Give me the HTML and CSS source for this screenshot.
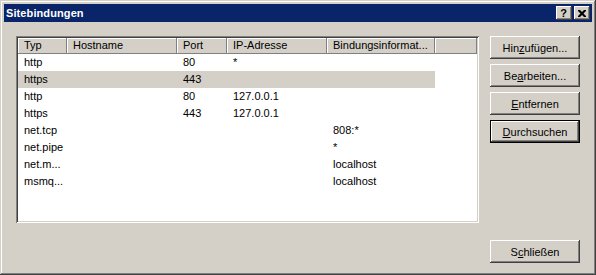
FILE: index.html
```html
<!DOCTYPE html>
<html lang="de">
<head>
    <meta charset="UTF-8">
    <title>Sitebindungen</title>
    <link rel="stylesheet" href="styles.css">
</head>
<body>

    <div class="window">
        <div class="titlebar">
            <span class="title">Sitebindungen</span>
            <div class="title-buttons">
                <div class="cap-btn help">?</div>
                <div class="cap-btn close">
                    <svg width="8" height="7" viewBox="0 0 8 7">
                        <path d="M0 0h2l2 2 2-2h2v1l-2.5 2.5 2.5 2.5v1h-2l-2-2-2 2h-2v-1l2.5-2.5-2.5-2.5z" fill="#000"/>
                    </svg>
                </div>
            </div>
        </div>

        <div class="content">
            <div class="listview">
                <div class="header">
                    <div class="col c1">Typ</div>
                    <div class="col c2">Hostname</div>
                    <div class="col c3">Port</div>
                    <div class="col c4">IP-Adresse</div>
                    <div class="col c5">Bindungsinformat...</div>
                    <div class="col filler"></div>
                </div>
                <div class="row">
                    <div class="cell c1">http</div><div class="cell c2"></div><div class="cell c3">80</div><div class="cell c4">*</div><div class="cell c5"></div>
                </div>
                <div class="row selected">
                    <div class="cell c1">https</div><div class="cell c2"></div><div class="cell c3">443</div><div class="cell c4"></div><div class="cell c5"></div>
                </div>
                <div class="row">
                    <div class="cell c1">http</div><div class="cell c2"></div><div class="cell c3">80</div><div class="cell c4">127.0.0.1</div><div class="cell c5"></div>
                </div>
                <div class="row">
                    <div class="cell c1">https</div><div class="cell c2"></div><div class="cell c3">443</div><div class="cell c4">127.0.0.1</div><div class="cell c5"></div>
                </div>
                <div class="row">
                    <div class="cell c1">net.tcp</div><div class="cell c2"></div><div class="cell c3"></div><div class="cell c4"></div><div class="cell c5">808:*</div>
                </div>
                <div class="row">
                    <div class="cell c1">net.pipe</div><div class="cell c2"></div><div class="cell c3"></div><div class="cell c4"></div><div class="cell c5">*</div>
                </div>
                <div class="row">
                    <div class="cell c1">net.m...</div><div class="cell c2"></div><div class="cell c3"></div><div class="cell c4"></div><div class="cell c5">localhost</div>
                </div>
                <div class="row">
                    <div class="cell c1">msmq...</div><div class="cell c2"></div><div class="cell c3"></div><div class="cell c4"></div><div class="cell c5">localhost</div>
                </div>
            </div>

            <div class="side">
                <div class="button-group">
                    <div class="btn">Hin<u>z</u>ufügen...</div>
                    <div class="btn">Be<u>a</u>rbeiten...</div>
                    <div class="btn"><u>E</u>ntfernen</div>
                    <div class="btn default"><u>D</u>urchsuchen</div>
                </div>
                <div class="btn">S<u>c</u>hließen</div>
            </div>
        </div>
    </div>

</body>
</html>
```

FILE: styles.css
```css
body {
    margin: 0;
    font-family: 'Liberation Sans', Arial, sans-serif;
    font-size: 11px;
    color: #000;
    background-color: #d4d0c8;
}

.window {
    width: 596px;
    height: 275px;
    box-sizing: border-box;
    padding: 4px;
    background-color: #d4d0c8;
    box-shadow: inset -1px -1px #404040, inset 1px 1px #d4d0c8,
                inset -2px -2px #808080, inset 2px 2px #fff;
    display: flex;
    flex-direction: column;
}

/* Titelleiste */
.titlebar {
    height: 18px;
    background-color: #0a246a;
    color: #fff;
    display: flex;
    align-items: center;
    justify-content: space-between;
    padding: 0 2px 0 2px;
    margin-bottom: 1px;
}

.title {
    font-weight: bold;
    font-size: 11px;
    letter-spacing: 0.1px;
}

.title-buttons {
    display: flex;
    gap: 2px;
}

.cap-btn {
    width: 16px;
    height: 14px;
    box-sizing: border-box;
    background-color: #d4d0c8;
    box-shadow: inset -1px -1px #404040, inset 1px 1px #fff,
                inset -2px -2px #808080;
    color: #000;
    display: flex;
    align-items: center;
    justify-content: center;
}

.cap-btn.help {
    font-weight: bold;
    font-size: 11px;
    line-height: 14px;
    padding-right: 1px;
}

.cap-btn.close svg {
    display: block;
    margin-right: 1px;
}

/* Inhalt */
.content {
    flex: 1;
    display: flex;
    gap: 11px;
    padding: 13px 8px 8px 12px;
}

.listview {
    width: 463px;
    height: 187px;
    box-sizing: border-box;
    padding: 2px;
    background-color: #fff;
    box-shadow: inset 1px 1px #808080, inset -1px -1px #fff,
                inset 2px 2px #404040, inset -2px -2px #d4d0c8;
}

.header {
    display: flex;
    height: 16px;
}

.header .col {
    height: 16px;
    box-sizing: border-box;
    padding-left: 6px;
    line-height: 15px;
    background-color: #d4d0c8;
    box-shadow: inset -1px -1px #808080, inset 1px 1px #fff;
    white-space: nowrap;
    overflow: hidden;
}

.header .filler {
    flex: 1;
    padding: 0;
}

.c1 { width: 49px; }
.c2 { width: 110px; }
.c3 { width: 50px; }
.c4 { width: 100px; }
.c5 { width: 108px; }

.row {
    display: flex;
    height: 17px;
    width: 417px;
}

.row.selected {
    background-color: #d4d0c8;
}

.cell {
    box-sizing: border-box;
    padding-left: 6px;
    line-height: 17px;
    white-space: nowrap;
}

/* Schaltflächen */
.side {
    width: 90px;
    display: flex;
    flex-direction: column;
    justify-content: space-between;
}

.button-group {
    display: flex;
    flex-direction: column;
    gap: 5px;
}

.btn {
    height: 23px;
    box-sizing: border-box;
    background-color: #d4d0c8;
    box-shadow: inset -1px -1px #404040, inset 1px 1px #fff,
                inset -2px -2px #808080, inset 2px 2px #d4d0c8;
    display: flex;
    align-items: center;
    justify-content: center;
    white-space: nowrap;
}

.btn.default {
    box-shadow: inset 0 0 0 1px #000, inset -2px -2px #404040,
                inset 2px 2px #fff, inset -3px -3px #808080;
}

.btn u {
    text-underline-offset: 1px;
}
```
